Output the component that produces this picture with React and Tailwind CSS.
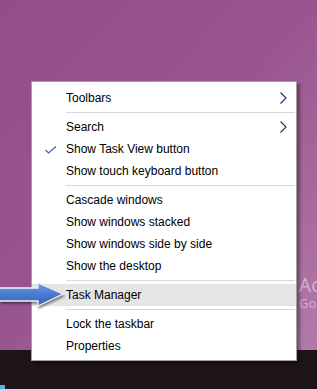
import React from 'react';

const items = [
    { label: 'Toolbars', submenu: true },
    { sep: true },
    { label: 'Search', submenu: true },
    { label: 'Show Task View button', checked: true },
    { label: 'Show touch keyboard button' },
    { sep: true },
    { label: 'Cascade windows' },
    { label: 'Show windows stacked' },
    { label: 'Show windows side by side' },
    { label: 'Show the desktop' },
    { sep: true },
    { label: 'Task Manager', hover: true },
    { sep: true },
    { label: 'Lock the taskbar' },
    { label: 'Properties' },
];

const Chevron = () => (
    <svg width="7" height="12" viewBox="0 0 7 12" className="absolute right-[9px] top-[5px]">
        <path d="M0.5 0.5 L6 6 L0.5 11.5" fill="none" stroke="#2a2460" strokeWidth="1.1" />
    </svg>
);

const Check = () => (
    <svg width="12" height="8" viewBox="0 0 12 8" className="absolute left-[13px] top-[8px]">
        <path d="M0.5 4 L3.5 7 L11 0.5" fill="none" stroke="#3b62a8" strokeWidth="1.2" />
    </svg>
);

const MenuRow = ({ item }) => {
    if (item.sep) {
        return (
            <div className="h-[7px] flex items-center pl-[34px] pr-[1px]">
                <div className="h-px w-full bg-[#d7d7d7]" />
            </div>
        );
    }
    return (
        <div className={`relative h-[22px] flex items-center pl-[34px] ${item.hover ? 'bg-[#e5e5e5]' : ''}`}>
            {item.checked && <Check />}
            <span className="text-[12px] text-black leading-none">{item.label}</span>
            {item.submenu && <Chevron />}
        </div>
    );
};

const Arrow = () => (
    <svg width="70" height="32" viewBox="0 0 70 32" className="absolute left-0 top-[280px] drop-shadow-[1px_2px_1px_rgba(0,0,0,0.45)]">
        <defs>
            <linearGradient id="ag" x1="0" y1="0" x2="0" y2="1">
                <stop offset="0" stopColor="#6f9be0" />
                <stop offset="0.5" stopColor="#4a7bd0" />
                <stop offset="1" stopColor="#3563b8" />
            </linearGradient>
        </defs>
        <polygon points="-2,8 38,8 38,3 63,14 38,26 38,21 -2,21" fill="url(#ag)" stroke="#f2f2f2" strokeWidth="1.3" strokeLinejoin="miter" />
    </svg>
);

export default function App() {
    return (
        <div className="relative w-[317px] h-[389px] overflow-hidden font-['Liberation_Sans','Noto_Sans',sans-serif]">
            <div className="h-[350px] bg-gradient-to-br from-[#924e87] via-[#99558f] to-[#b27aa9]" />
            <div className="h-[39px] bg-[#1d1419]" />
            <div className="absolute left-0 bottom-0 w-[5px] h-[4px] bg-[#4fb0e8]" />

            <div className="absolute left-[299px] top-[275px] flex flex-col text-[#cfb0cb] font-['Noto_Sans',sans-serif]">
                <span className="text-[19px] leading-[20px]">Ac</span>
                <span className="text-[13px] leading-[16px]">Go</span>
            </div>

            <div className="absolute left-[31px] top-[81px] w-[266px] h-[280px] flex flex-col bg-white border border-[#a0a0a0] pt-[5px] shadow-[3px_3px_3px_rgba(0,0,0,0.35)]">
                {items.map((item, i) => (
                    <MenuRow key={i} item={item} />
                ))}
            </div>

            <Arrow />
        </div>
    );
}
